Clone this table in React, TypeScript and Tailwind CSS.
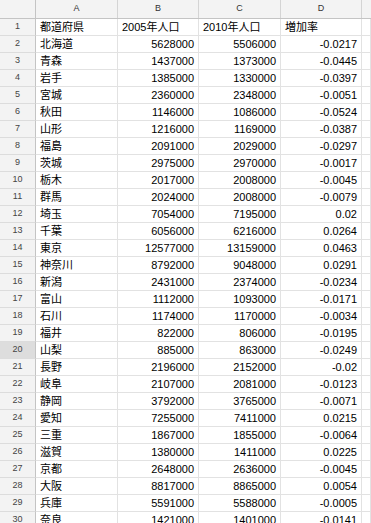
const rows: [string, string, string, string][] = [
  ['北海道', '5628000', '5506000', '-0.0217'],
  ['青森', '1437000', '1373000', '-0.0445'],
  ['岩手', '1385000', '1330000', '-0.0397'],
  ['宮城', '2360000', '2348000', '-0.0051'],
  ['秋田', '1146000', '1086000', '-0.0524'],
  ['山形', '1216000', '1169000', '-0.0387'],
  ['福島', '2091000', '2029000', '-0.0297'],
  ['茨城', '2975000', '2970000', '-0.0017'],
  ['栃木', '2017000', '2008000', '-0.0045'],
  ['群馬', '2024000', '2008000', '-0.0079'],
  ['埼玉', '7054000', '7195000', '0.02'],
  ['千葉', '6056000', '6216000', '0.0264'],
  ['東京', '12577000', '13159000', '0.0463'],
  ['神奈川', '8792000', '9048000', '0.0291'],
  ['新潟', '2431000', '2374000', '-0.0234'],
  ['富山', '1112000', '1093000', '-0.0171'],
  ['石川', '1174000', '1170000', '-0.0034'],
  ['福井', '822000', '806000', '-0.0195'],
  ['山梨', '885000', '863000', '-0.0249'],
  ['長野', '2196000', '2152000', '-0.02'],
  ['岐阜', '2107000', '2081000', '-0.0123'],
  ['静岡', '3792000', '3765000', '-0.0071'],
  ['愛知', '7255000', '7411000', '0.0215'],
  ['三重', '1867000', '1855000', '-0.0064'],
  ['滋賀', '1380000', '1411000', '0.0225'],
  ['京都', '2648000', '2636000', '-0.0045'],
  ['大阪', '8817000', '8865000', '0.0054'],
  ['兵庫', '5591000', '5588000', '-0.0005'],
  ['奈良', '1421000', '1401000', '-0.0141'],
];

const grid = 'grid grid-cols-[36px_82px_81px_82px_81px_1fr]';
const cell = 'h-[17px] border-r border-b border-[#e2e2e2] px-[4px] flex items-center whitespace-nowrap overflow-hidden';
const rowHead = 'h-[17px] border-r border-b border-r-[#c4c4c4] border-b-[#dcdcdc] flex items-center justify-center text-[9px] text-[#444]';

export default function App() {
  return (
    <div
      className="w-[371px] h-[523px] overflow-hidden bg-white text-[11px] text-black"
      style={{ fontFamily: '"Liberation Sans", Arial, "Noto Sans CJK JP", sans-serif' }}
    >
      {/* column letters */}
      <div className={`${grid} h-[19px] bg-[#f3f3f3] border-b border-[#c4c4c4] text-[9px] text-[#333]`}>
        <div className="border-r border-[#c4c4c4]" />
        {['A', 'B', 'C', 'D'].map((c) => (
          <div key={c} className="border-r border-[#d4d4d4] flex items-center justify-center">
            {c}
          </div>
        ))}
        <div />
      </div>

      {/* header row */}
      <div className={grid}>
        <div className={`${rowHead} bg-[#f3f3f3]`}>1</div>
        <div className={cell}>都道府県</div>
        <div className={cell}>2005年人口</div>
        <div className={cell}>2010年人口</div>
        <div className={cell}>増加率</div>
        <div className={cell} />
      </div>

      {rows.map((r, i) => {
        const n = i + 2;
        return (
          <div key={n} className={grid}>
            <div className={`${rowHead} ${n === 20 ? 'bg-[#dddddd]' : 'bg-[#f3f3f3]'}`}>{n}</div>
            <div className={cell}>{r[0]}</div>
            <div className={`${cell} justify-end`}>{r[1]}</div>
            <div className={`${cell} justify-end`}>{r[2]}</div>
            <div className={`${cell} justify-end`}>{r[3]}</div>
            <div className={cell} />
          </div>
        );
      })}
    </div>
  );
}
